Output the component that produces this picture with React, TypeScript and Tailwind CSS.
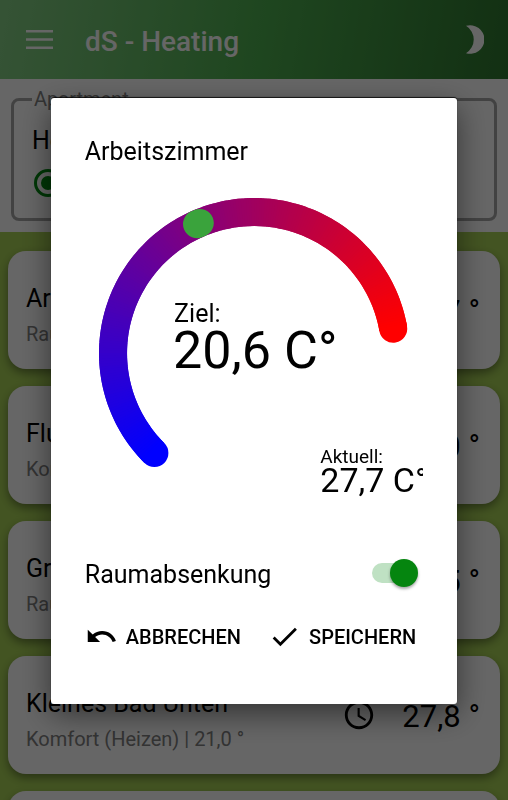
import { useState } from "react";
import { MdAccessTime, MdCheck, MdUndo } from "react-icons/md";

const ROOMS = [
  { name: "Arbeitszimmer", mode: "Raumabsenkung", temp: "27,7" },
  { name: "Flur", mode: "Komfort (Heizen) | 21,0 °", temp: "27,0" },
  { name: "Großes Bad", mode: "Raumabsenkung", temp: "26,5" },
  { name: "Kleines Bad Unten", mode: "Komfort (Heizen) | 21,0 °", temp: "27,8" },
  { name: "Küche", mode: "Komfort (Heizen) | 21,0 °", temp: "27,4" },
];

const CENTER = 169;
const RADIUS = 141;
const START = -225;
const SWEEP = 215;
const MIN = 10;
const MAX = 30.4;

function point(angle: number) {
  const rad = (angle * Math.PI) / 180;
  return `${(CENTER + RADIUS * Math.cos(rad)).toFixed(2)} ${(CENTER + RADIUS * Math.sin(rad)).toFixed(2)}`;
}

function arc(from: number, to: number) {
  return `M${point(from)}A${RADIUS} ${RADIUS} 0 0 1 ${point(to)}`;
}

function mix(t: number) {
  return `rgb(${Math.round(255 * t)},0,${Math.round(255 * (1 - t))})`;
}

function format(value: number) {
  return value.toFixed(1).replace(".", ",");
}

function Dial({ value, current }: { value: number; current: number }) {
  const knob = START + (SWEEP * (value - MIN)) / (MAX - MIN);
  return (
    <svg viewBox="0 0 338 338" className="mt-3.5 block w-full overflow-hidden" fill="none" strokeWidth="28">
      <path d={arc(START, START + 1)} stroke={mix(0)} strokeLinecap="round" />
      <path d={arc(START + SWEEP - 1, START + SWEEP)} stroke={mix(1)} strokeLinecap="round" />
      {Array.from({ length: SWEEP }, (_, i) => (
        <path
          key={i}
          d={arc(START + i, Math.min(START + i + 2, START + SWEEP))}
          stroke={mix(i / (SWEEP - 1))}
        />
      ))}
      <path d={arc(knob - 0.6, knob + 0.6)} stroke="#3aa33c" strokeLinecap="round" />
      <g fill="#000" stroke="none">
        <text x="89" y="138" fontSize="25">Ziel:</text>
        <text x="88" y="184" fontSize="52">{format(value)} C°</text>
        <text x="235" y="279" fontSize="19">Aktuell:</text>
        <text x="235" y="308" fontSize="34">{format(current)} C°</text>
      </g>
    </svg>
  );
}

function RoomCard({ name, mode, temp }: { name: string; mode: string; temp: string }) {
  return (
    <li className="flex h-[118px] items-center rounded-[18px] bg-white pr-5 pl-[18px] shadow-[0_4px_10px_rgba(0,0,0,0.4)]">
      <div className="min-w-0 flex-1 pt-3">
        <h2 className="text-[25px] leading-[36px] text-black">{name}</h2>
        <p className="text-[20px] leading-[34px] text-[#808080]">{mode}</p>
      </div>
      <MdAccessTime className="mr-[26px] size-[34px]" />
      <span className="pt-1 text-[31px] leading-[36px]">{temp} °</span>
    </li>
  );
}

export default function App() {
  const [target, setTarget] = useState(20.6);
  const [lowered, setLowered] = useState(true);

  return (
    <div className="h-screen overflow-hidden bg-[#a8d256] font-['Roboto',sans-serif] text-black">
      <header className="flex h-[79px] items-center bg-linear-[100deg] from-[#86d086] via-[#4eb050] to-[#2f7830] pr-6 pl-[26px] text-white">
        <button type="button" aria-label="Menü">
          <svg viewBox="0 0 27 20" className="h-5 w-[27px]" stroke="currentColor" strokeWidth="2.4">
            <path d="M0 1.2h27M0 9.5h27M0 17.8h27" />
          </svg>
        </button>
        <h1 className="ml-8 flex-1 pt-1 text-[28px] leading-9 font-medium">dS - Heating</h1>
        <button type="button" aria-label="Nachtmodus">
          <svg viewBox="0 0 18 29" className="h-[29px] w-[18px]" fill="currentColor">
            <path d="M0 .8A14.3 14.3 0 1 1 0 28.2A16 16 0 0 0 0 .8Z" />
          </svg>
        </button>
      </header>

      <section className="h-[153px] bg-white px-[11px] pt-2">
        <fieldset className="h-[134px] rounded-lg border-[3px] border-[#a6a6a6] px-[18px]">
          <legend className="px-0.5 text-[20px] leading-6 text-[#808080]">Apartment</legend>
          <label htmlFor="mode-heat" className="mt-3.5 block text-[25px] leading-8">Heizen</label>
          <input
            id="mode-heat"
            type="radio"
            name="mode"
            defaultChecked
            className="mt-3 ml-0.5 block size-7 appearance-none rounded-full border-[3px] border-[#008a10] bg-[#008a10] bg-clip-content p-1"
          />
        </fieldset>
      </section>

      <ul className="flex flex-col gap-[17px] px-2 pt-[19px]">
        {ROOMS.map((room) => (
          <RoomCard key={room.name} {...room} />
        ))}
      </ul>

      <div className="fixed inset-0 flex items-center justify-center bg-black/60 pt-0.5">
        <div
          role="dialog"
          aria-modal="true"
          aria-labelledby="dialog-title"
          className="w-4/5 rounded-[3px] bg-white px-[34px] pt-9 pb-[47px] shadow-[0_-1px_1px_rgba(0,0,0,0.8),0_10px_30px_rgba(0,0,0,0.5)]"
        >
          <h2 id="dialog-title" className="text-[25px] leading-9">Arbeitszimmer</h2>
          <input
            type="range"
            aria-label="Ziel"
            min={MIN}
            max={MAX}
            step={0.1}
            value={target}
            onChange={(e) => setTarget(Number(e.target.value))}
            className="sr-only"
          />
          <Dial value={target} current={27.7} />

          <div className="mt-[30px] flex h-10 items-center justify-between pr-[5px]">
            <label htmlFor="lowering" className="pt-1 text-[25px] leading-8">Raumabsenkung</label>
            <span className="relative h-7 w-[46px]">
              <input
                id="lowering"
                type="checkbox"
                role="switch"
                checked={lowered}
                onChange={(e) => setLowered(e.target.checked)}
                className="peer my-1 block h-5 w-[43px] appearance-none rounded-full bg-gray-300 checked:bg-[#bfe1c3]"
              />
              <span className="pointer-events-none absolute top-0 left-0 size-7 rounded-full bg-gray-100 shadow-[0_2px_3px_rgba(0,0,0,0.35)] peer-checked:left-[18px] peer-checked:bg-[#05850f]" />
            </span>
          </div>

          <div className="mt-6 flex h-10 items-center justify-between pr-[7px] text-[20px] font-medium">
            <button type="button" className="flex items-center gap-2 uppercase">
              <MdUndo className="size-[33px]" />
              Abbrechen
            </button>
            <button type="button" className="flex items-center gap-2 uppercase">
              <MdCheck className="size-[33px]" />
              Speichern
            </button>
          </div>
        </div>
      </div>
    </div>
  );
}
